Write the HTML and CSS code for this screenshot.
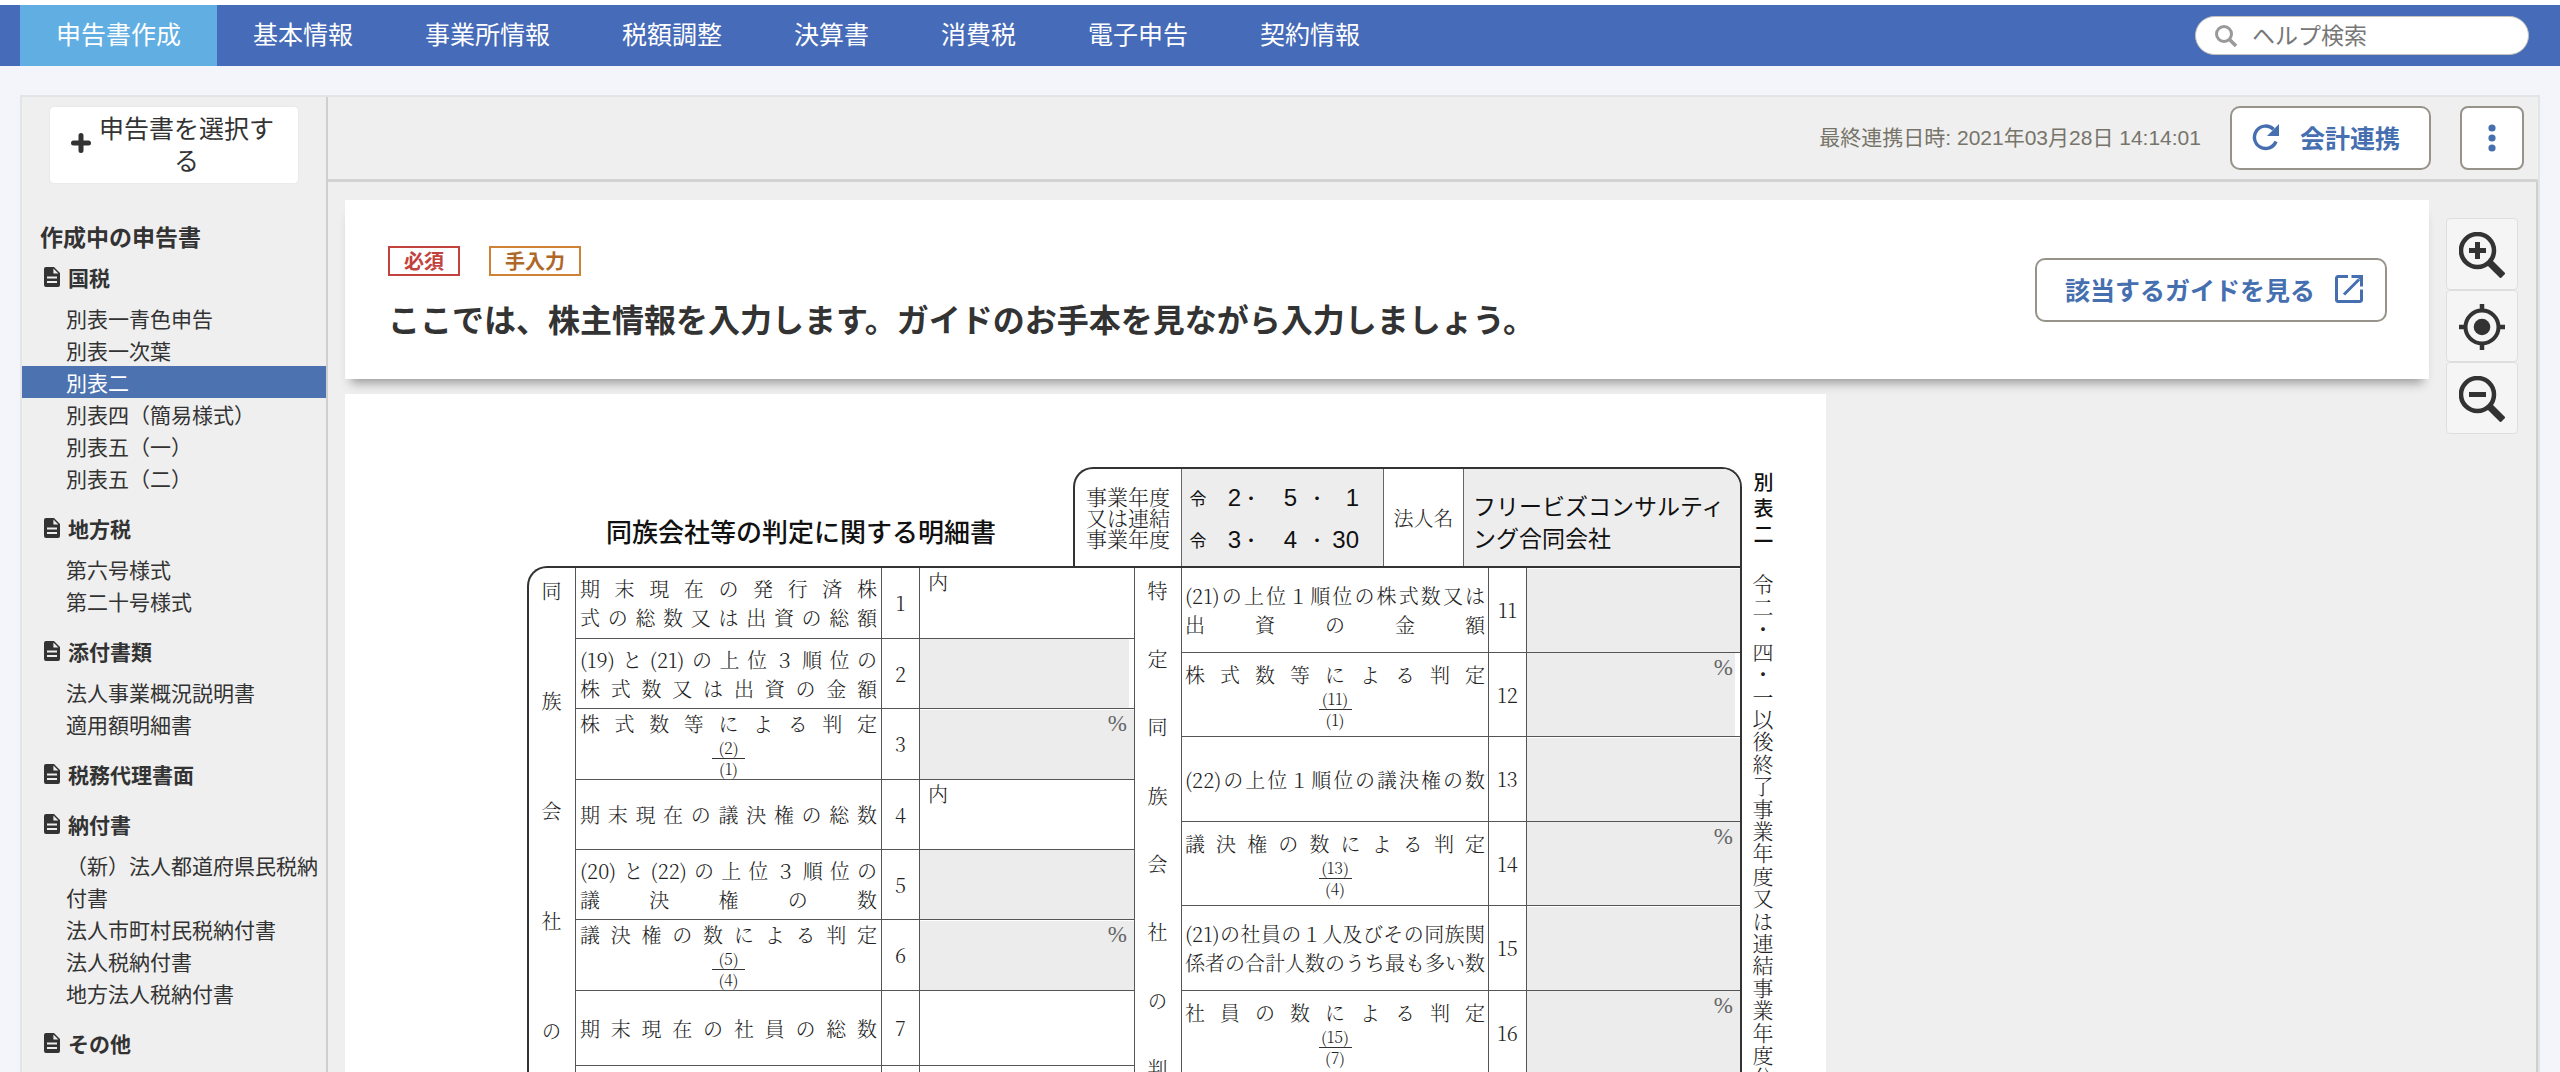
FILE: index.html
```html
<!DOCTYPE html>
<html lang="ja">
<head>
<meta charset="utf-8">
<meta name="viewport" content="width=device-width, initial-scale=1">
<title>申告書作成 - 別表二</title>
<link rel="stylesheet" href="styles.css">
</head>
<body>
<svg class="defs" aria-hidden="true">
  <symbol id="doc" viewBox="0 0 16 20">
    <path fill="currentColor" fill-rule="evenodd" d="M2 0h8l6 6v12a2 2 0 0 1-2 2H2a2 2 0 0 1-2-2V2a2 2 0 0 1 2-2zM9.400 1.600v5h5zM3 9.500v2h10v-2zM3 14v2h10v-2z"/>
  </symbol>
  <symbol id="lens" viewBox="0 0 46 46">
    <circle cx="18.500" cy="18.500" r="16.500" fill="none" stroke="currentColor" stroke-width="4.500"/>
    <path d="M30 30L44 44" stroke="currentColor" stroke-width="7"/>
  </symbol>
</svg>

<header class="topbar">
  <nav class="tabs" aria-label="メイン">
    <a class="tab tab-active" href="#">申告書作成</a>
    <a class="tab" href="#">基本情報</a>
    <a class="tab" href="#">事業所情報</a>
    <a class="tab" href="#">税額調整</a>
    <a class="tab" href="#">決算書</a>
    <a class="tab" href="#">消費税</a>
    <a class="tab" href="#">電子申告</a>
    <a class="tab" href="#">契約情報</a>
  </nav>
  <label class="search">
    <svg class="search-icon" viewBox="0 0 24 24" aria-hidden="true"><circle cx="10" cy="10" r="7.500" fill="none" stroke="currentColor" stroke-width="3"/><path d="M15.500 15.500L22 22" stroke="currentColor" stroke-width="3.500"/></svg>
    <input class="search-input" type="search" placeholder="ヘルプ検索" aria-label="ヘルプ検索">
  </label>
</header>

<div class="app">
  <aside class="sidebar">
    <button class="select-form" type="button">
      <svg class="plus" viewBox="0 0 20 20" aria-hidden="true"><path d="M10 2.500v15M2.500 10h15" stroke="currentColor" stroke-width="5" stroke-linecap="round"/></svg>
      <span class="select-text">申告書を選択する</span>
    </button>
    <h2 class="side-title">作成中の申告書</h2>
    <section class="group">
      <h3 class="group-title"><svg class="doc"><use href="#doc"/></svg>国税</h3>
      <ul class="items">
        <li><a class="item" href="#">別表一青色申告</a></li>
        <li><a class="item" href="#">別表一次葉</a></li>
        <li><a class="item item-active" href="#">別表二</a></li>
        <li><a class="item" href="#">別表四（簡易様式）</a></li>
        <li><a class="item" href="#">別表五（一）</a></li>
        <li><a class="item" href="#">別表五（二）</a></li>
      </ul>
    </section>
    <section class="group">
      <h3 class="group-title"><svg class="doc"><use href="#doc"/></svg>地方税</h3>
      <ul class="items">
        <li><a class="item" href="#">第六号様式</a></li>
        <li><a class="item" href="#">第二十号様式</a></li>
      </ul>
    </section>
    <section class="group">
      <h3 class="group-title"><svg class="doc"><use href="#doc"/></svg>添付書類</h3>
      <ul class="items">
        <li><a class="item" href="#">法人事業概況説明書</a></li>
        <li><a class="item" href="#">適用額明細書</a></li>
      </ul>
    </section>
    <section class="group">
      <h3 class="group-title"><svg class="doc"><use href="#doc"/></svg>税務代理書面</h3>
    </section>
    <section class="group">
      <h3 class="group-title"><svg class="doc"><use href="#doc"/></svg>納付書</h3>
      <ul class="items">
        <li><a class="item" href="#">（新）法人都道府県民税納付書</a></li>
        <li><a class="item" href="#">法人市町村民税納付書</a></li>
        <li><a class="item" href="#">法人税納付書</a></li>
        <li><a class="item" href="#">地方法人税納付書</a></li>
      </ul>
    </section>
    <section class="group">
      <h3 class="group-title"><svg class="doc"><use href="#doc"/></svg>その他</h3>
    </section>
  </aside>

  <main class="main">
    <div class="actions">
      <span class="synced">最終連携日時: 2021年03月28日 14:14:01</span>
      <button class="btn btn-sync" type="button">
        <svg class="icon-sync" viewBox="0 0 27 27" aria-hidden="true"><path d="M24 17.500A11.200 11.200 0 1 1 21.500 5.300" fill="none" stroke="currentColor" stroke-width="3.400"/><path d="M27 0v12H15z" fill="currentColor"/></svg>
        会計連携
      </button>
      <button class="btn btn-more" type="button" aria-label="メニュー">
        <svg class="icon-more" viewBox="0 0 8 28" aria-hidden="true"><circle cx="4" cy="4" r="3.600" fill="currentColor"/><circle cx="4" cy="14" r="3.600" fill="currentColor"/><circle cx="4" cy="24" r="3.600" fill="currentColor"/></svg>
      </button>
    </div>

    <div class="body">
      <div class="content">
        <section class="notice">
          <div class="notice-text">
            <div class="tags"><span class="tag tag-required">必須</span><span class="tag tag-manual">手入力</span></div>
            <p class="lead">ここでは、株主情報を入力します。ガイドのお手本を見ながら入力しましょう。</p>
          </div>
          <button class="btn btn-guide" type="button">
            該当するガイドを見る
            <svg class="icon-open" viewBox="0 0 28 28" aria-hidden="true"><path d="M13 1.500H3A1.500 1.500 0 0 0 1.500 3v22A1.500 1.500 0 0 0 3 26.500h22a1.500 1.500 0 0 0 1.500-1.500V14.500M9 19.500L24 4.500" fill="none" stroke="currentColor" stroke-width="3"/><path d="M16.500 0H28v11.500h-3V5l-2-2h-6.500z" fill="currentColor"/></svg>
          </button>
        </section>

        <section class="sheet">
          <div class="form">
            <div class="form-head">
              <h1 class="form-title">同族会社等の判定に関する明細書</h1>
              <div class="period">
                <div class="period-label">事業年度<br>又は連結<br>事業年度</div>
                <div class="dates">
                  <span class="era">令</span><span class="num">2</span><i>・</i><span class="num">5</span><i>・</i><span class="num">1</span>
                  <span class="era">令</span><span class="num">3</span><i>・</i><span class="num">4</span><i>・</i><span class="num">30</span>
                </div>
                <div class="corp-label">法人名</div>
                <div class="corp">フリービズコンサルティング合同会社</div>
              </div>
            </div>
            <div class="frame">
              <div class="spine"><span class="spine-text spine-left">同族会社の判定</span></div>
              <table class="grid grid-left">
                <tr><th class="label">期末現在の発行済株<br>式の総数又は出資の総額</th><td class="no">1</td><td class="field"><span class="unit-in">内</span><input aria-label="1" type="text"></td></tr>
                <tr><th class="label">(19)と(21)の上位３順位の<br>株式数又は出資の金額</th><td class="no">2</td><td class="field"><input class="auto auto-inset" aria-label="2" type="text" readonly></td></tr>
                <tr><th class="label">株式数等による判定<span class="frac"><span>(2)</span><span>(1)</span></span></th><td class="no">3</td><td class="field"><span class="pct">%</span><input class="auto" aria-label="3" type="text" readonly></td></tr>
                <tr><th class="label">期末現在の議決権の総数</th><td class="no">4</td><td class="field"><span class="unit-in">内</span><input aria-label="4" type="text"></td></tr>
                <tr><th class="label">(20)と(22)の上位３順位の<br>議決権の数</th><td class="no">5</td><td class="field"><input class="auto" aria-label="5" type="text" readonly></td></tr>
                <tr><th class="label">議決権の数による判定<span class="frac"><span>(5)</span><span>(4)</span></span></th><td class="no">6</td><td class="field"><span class="pct">%</span><input class="auto" aria-label="6" type="text" readonly></td></tr>
                <tr class="tall"><th class="label">期末現在の社員の総数</th><td class="no">7</td><td class="field"><input aria-label="7" type="text"></td></tr>
                <tr><th class="label"></th><td class="no"></td><td class="field"><input aria-label="8" type="text"></td></tr>
              </table>
              <div class="spine"><span class="spine-text spine-right">特定同族会社の判定</span></div>
              <table class="grid grid-right">
                <tr><th class="label">(21)の上位１順位の株式数又は<br>出資の金額</th><td class="no">11</td><td class="field"><input class="auto" aria-label="11" type="text" readonly></td></tr>
                <tr><th class="label">株式数等による判定<span class="frac"><span>(11)</span><span>(1)</span></span></th><td class="no">12</td><td class="field"><span class="pct">%</span><input class="auto auto-inset" aria-label="12" type="text" readonly></td></tr>
                <tr><th class="label">(22)の上位１順位の議決権の数</th><td class="no">13</td><td class="field"><input class="auto" aria-label="13" type="text" readonly></td></tr>
                <tr><th class="label">議決権の数による判定<span class="frac"><span>(13)</span><span>(4)</span></span></th><td class="no">14</td><td class="field"><span class="pct">%</span><input class="auto" aria-label="14" type="text" readonly></td></tr>
                <tr><th class="label">(21)の社員の１人及びその同族関<br>係者の合計人数のうち最も多い数</th><td class="no">15</td><td class="field"><input class="auto" aria-label="15" type="text" readonly></td></tr>
                <tr><th class="label">社員の数による判定<span class="frac"><span>(15)</span><span>(7)</span></span></th><td class="no">16</td><td class="field"><span class="pct">%</span><input class="auto" aria-label="16" type="text" readonly></td></tr>
              </table>
            </div>
          </div>
          <div class="margin-note">
            <span class="note-name">別表二</span>
            <span class="note-rule">令二・四・一以後終了事業年度又は連結事業年度分</span>
          </div>
        </section>
      </div>

      <div class="zoom">
        <button class="zoom-btn" type="button" aria-label="拡大"><svg class="icon-zoom" viewBox="0 0 46 46"><use href="#lens"/><path d="M10 18.500h17M18.500 10v17" stroke="currentColor" stroke-width="5"/></svg></button>
        <button class="zoom-btn" type="button" aria-label="元のサイズ"><svg class="icon-zoom" viewBox="0 0 46 46"><circle cx="23" cy="23" r="16.500" fill="none" stroke="currentColor" stroke-width="4"/><circle cx="23" cy="23" r="8.300" fill="currentColor"/><path d="M23 0v7M23 39v7M0 23h7M39 23h7" stroke="currentColor" stroke-width="4.500"/></svg></button>
        <button class="zoom-btn" type="button" aria-label="縮小"><svg class="icon-zoom" viewBox="0 0 46 46"><use href="#lens"/><path d="M10 18.500h17" stroke="currentColor" stroke-width="5"/></svg></button>
      </div>
    </div>
  </main>
</div>
</body>
</html>
```
FILE: styles.css
```css
*, *::before, *::after { box-sizing: border-box; }

body {
  display: flex;
  flex-direction: column;
  height: 100vh;
  margin: 0;
  padding-top: 5px;
  overflow: hidden;
  background: linear-gradient(#fff 5px, #f3f5fb 5px);
  color: #333;
  font-family: "Noto Sans CJK JP", sans-serif;
  font-size: 21px;
  line-height: 32px;
}

h1, h2, h3, p, ul { margin: 0; padding: 0; }
ul { list-style: none; }
a { color: inherit; text-decoration: none; }
button, input { font: inherit; color: inherit; }
button { cursor: pointer; }
.defs { position: absolute; width: 0; height: 0; }

/* top navigation */
.topbar {
  display: flex;
  flex: none;
  align-items: center;
  justify-content: space-between;
  height: 61px;
  padding: 0 31px 0 20px;
  background: #466bb8;
}
.tabs { display: flex; height: 100%; }
.tab {
  padding: 0 36px;
  color: #fff;
  font-size: 25px;
  line-height: 57px;
}
.tab-active { background: #61aee3; }
.search {
  display: flex;
  align-items: center;
  gap: 14px;
  width: 334px;
  height: 39px;
  padding: 0 18px;
  border: 1px solid #c4c2ba;
  border-radius: 20px;
  background: #fff;
}
.search-icon { flex: none; width: 24px; height: 24px; color: #999; }
.search-input {
  flex: 1;
  min-width: 0;
  height: 36px;
  padding: 0 0 4px;
  border: 0;
  outline: 0;
  background: none;
  font-size: 23px;
  appearance: none;
}
.search-input::placeholder { color: #777; }

/* application panel */
.app {
  display: flex;
  flex: 1;
  min-height: 0;
  margin: 29px 20px 0;
  border: 2px solid #e2e4e8;
  border-bottom: 0;
  background: #efefef;
}

/* sidebar */
.sidebar {
  flex: none;
  width: 306px;
  overflow: hidden;
  border-right: 2px solid #cfcfcf;
}
.select-form {
  display: flex;
  align-items: center;
  gap: 8px;
  width: 248px;
  margin: 10px 28px 37px;
  padding: 4px 21px 8px;
  border: 0;
  border-radius: 4px;
  background: #fff;
  box-shadow: 0 0 2px #ddd;
  font-size: 25px;
}
.plus { flex: none; width: 20px; height: 20px; }
.select-text { width: 175px; text-align: center; }
.side-title { padding-left: 18px; font-size: 23px; }
.group { padding-top: 9px; }
.group + .group { padding-top: 18px; }
.group-title {
  display: flex;
  align-items: center;
  gap: 8px;
  padding-left: 22px;
  font-size: 21px;
}
.doc { width: 16px; height: 20px; }
.items { padding-top: 9px; }
.item { display: block; padding: 0 4px 0 44px; }
.item-active { background: #4c73b0; color: #fff; }

/* main area */
.main {
  display: flex;
  flex: 1;
  flex-direction: column;
  min-width: 0;
}
.actions {
  display: flex;
  flex: none;
  align-items: center;
  justify-content: flex-end;
  gap: 29px;
  padding: 9px 14px;
  border-bottom: 3px solid #d3d3d3;
}
.synced {
  color: #77746a;
  font-family: "Liberation Sans", "Noto Sans CJK JP", sans-serif;
}
.btn {
  display: flex;
  align-items: center;
  height: 64px;
  border: 2px solid #97938a;
  border-radius: 10px;
  background: #fff;
  color: #466fb0;
  font-size: 25px;
  font-weight: 700;
}
.btn-sync { gap: 21px; padding: 0 29px 2px 20px; }
.icon-sync { width: 27px; height: 27px; }
.btn-more { justify-content: center; width: 64px; padding: 0; border-radius: 8px; }
.icon-more { width: 8px; height: 28px; }
.btn-guide { flex: none; gap: 20px; padding: 0 22px 2px 28px; }
.icon-open { width: 28px; height: 28px; }

.body {
  display: flex;
  flex: 1;
  min-height: 0;
  gap: 17px;
  padding: 18px 18px 0 17px;
  overflow: hidden;
  border-right: 2px solid #cfcfcf;
}
.content { flex: 1; min-width: 0; }

.notice {
  display: flex;
  align-items: center;
  justify-content: space-between;
  height: 179px;
  margin-bottom: 15px;
  padding: 0 42px 0 43px;
  background: #fff;
  box-shadow: 0 10px 10px -6px #999;
}
.notice-text { padding-top: 7px; }
.tags { display: flex; gap: 29px; margin-bottom: 20px; }
.tag {
  padding: 0 14px;
  border: 2px solid;
  font-size: 20px;
  font-weight: 700;
  line-height: 26px;
}
.tag-required { color: #c2423e; }
.tag-manual { border-color: #cf8136; color: #ae6827; }
.lead { font-size: 32px; font-weight: 700; line-height: 44px; }

.zoom { flex: none; padding-top: 18px; }
.zoom-btn {
  display: flex;
  align-items: center;
  justify-content: center;
  width: 72px;
  height: 72px;
  padding: 2px 0 0;
  border: 1px solid #dedede;
  border-radius: 4px;
  background: #f5f5f5;
}
.icon-zoom { width: 46px; height: 46px; }

/* paper form */
.sheet {
  display: flex;
  gap: 11px;
  width: fit-content;
  position: relative;
  padding: 73px 53px 0 182px;
  background: #fff;
}
.form { width: 1215px; }
.form-head {
  display: flex;
  justify-content: space-between;
  height: 99px;
  padding-left: 79px;
}
.form-title {
  padding-top: 44px;
  color: #111;
  font-size: 26px;
  font-weight: 500;
  line-height: 40px;
}
.period {
  display: grid;
  grid-template-columns: 107px 202px 80px 1fr;
  width: 669px;
  overflow: hidden;
  border: 2px solid #333;
  border-bottom: 0;
  border-radius: 20px 20px 0 0;
}
.period > * { border-right: 1px solid #666; }
.period > :last-child { border-right: 0; }
.period-label, .corp-label, .frame, .note-rule {
  color: #222;
  font-family: "Noto Serif CJK JP", "Liberation Serif", "Noto Sans CJK JP", serif;
  font-weight: 300;
}
.period-label { padding: 17px 0 0 11px; line-height: 21px; }
.dates {
  display: grid;
  grid-template-columns: 28px 29px 20px 36px 40px 22px;
  grid-auto-rows: 42px;
  align-content: start;
  align-items: center;
  justify-items: center;
  padding: 8px 0 0 2px;
  background: #ededed;
  color: #111;
}
.era { font-size: 17px; }
.dates i { font-size: 17px; font-style: normal; }
.num {
  justify-self: end;
  font-family: "Liberation Sans", sans-serif;
  font-size: 24px;
}
.corp-label { font-size: 20px; line-height: 98px; text-align: center; }
.corp {
  padding: 20px 8px 0 9px;
  background: #ededed;
  color: #111;
  font-size: 23px;
}

.frame {
  display: flex;
  align-items: stretch;
  overflow: hidden;
  border: 2px solid #333;
  border-bottom: 0;
  border-radius: 20px 0 0 0;
  font-size: 20px;
}
.spine {
  flex: none;
  width: 47px;
  padding: 13px 0 0;
  border-right: 1px solid #555;
}
.spine-text, .note-name, .note-rule {
  display: block;
  writing-mode: vertical-rl;
  text-align-last: justify;
}
.spine-text { width: 44px; line-height: 44px; }
.spine-left { height: 680px; }
.spine-right { height: 567px; }

.grid {
  flex: none;
  align-self: flex-start;
  table-layout: fixed;
  border-spacing: 0;
}
.grid-left { width: 559px; border-right: 1px solid #555; }
.grid-right { width: 558px; }
.grid td, .grid th {
  padding: 0;
  border-bottom: 1px solid #555;
}
.label {
  width: 306px;
  font-weight: 300;
  line-height: 29px;
  text-align: justify;
  text-align-last: justify;
}
.grid-left tr { height: 70px; }
.grid-left tr:first-child { height: 71px; }
.grid-left .tall { height: 75px; }
.grid-right tr { height: 84px; }
.grid-right tr:nth-child(odd) { height: 85px; }
.grid .label { padding: 0 4px; border-right: 1px solid #555; }
.grid-right .label { width: 307px; padding: 0 3px; }
.no { width: 38px; text-align: center; }
.grid .no { border-right: 1px solid #555; }
.frac {
  display: grid;
  justify-content: center;
  font-size: 16px;
  line-height: 20px;
  text-align: center;
  text-align-last: center;
}
.frac span { width: 33px; }
.frac span:first-child { border-bottom: 1px solid #333; }
.field { position: relative; height: inherit; }
.field input {
  display: block;
  width: 100%;
  height: 69px;
  padding: 0 10px;
  border: 0;
  outline: 0;
  background: none;
}
.grid-right .field input { height: 83px; }
.field .auto { background: #ececec; }
.field .auto-inset { width: calc(100% - 5px); }
.unit-in { position: absolute; top: 0; left: 8px; line-height: 28px; }
.pct {
  position: absolute;
  top: 0;
  right: 7px;
  color: #666;
  font-family: "Liberation Serif", serif;
  font-size: 23px;
  line-height: 30px;
}

.margin-note { width: 20px; }
.note-name, .note-rule { width: 20px; line-height: 20px; }
.note-name { height: 72px; margin: 5px 0 30px; color: #111; font-size: 20px; font-weight: 500; }
.note-rule { height: 514px; }
```
